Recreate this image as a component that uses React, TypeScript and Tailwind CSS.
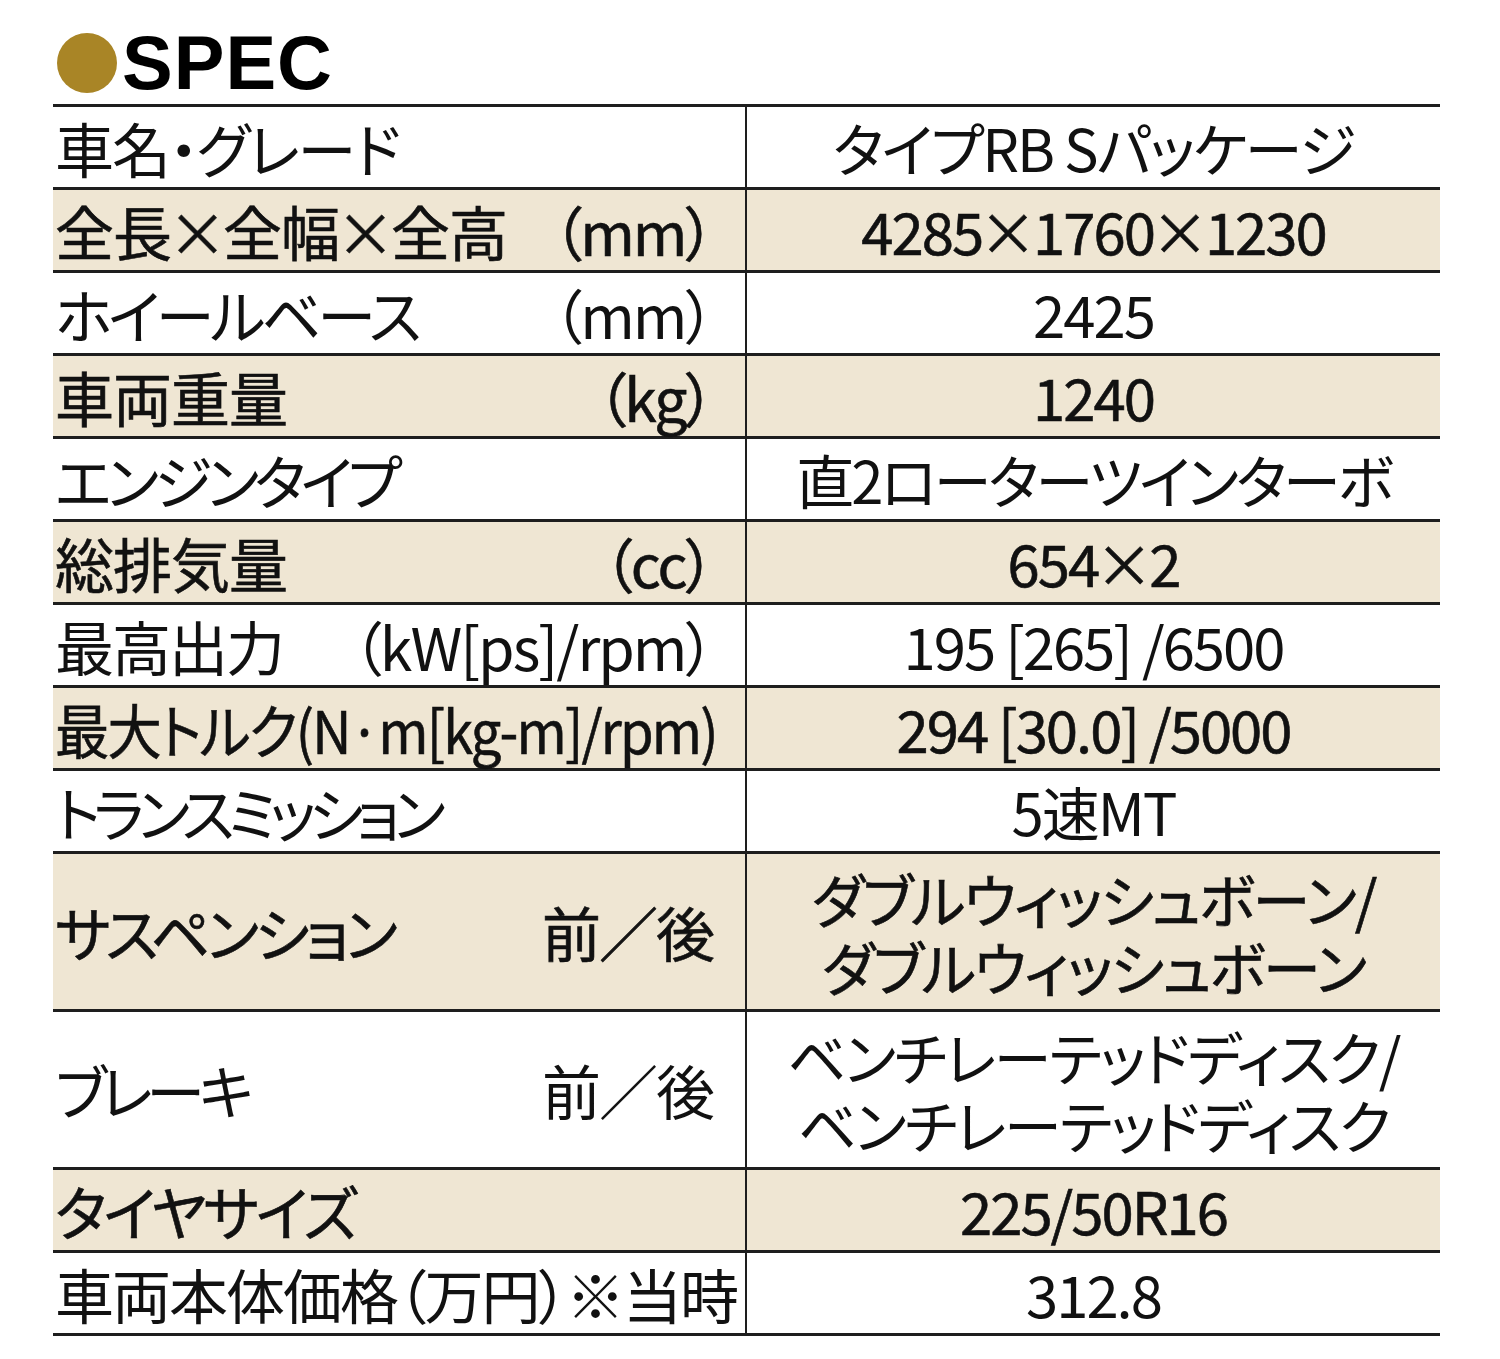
import React from "react";

interface SpecRow {
  label: string;
  unit?: string;
  value: string[];
  shade?: boolean;
  tall?: boolean;
  labelFit?: string;
  valueFit?: string;
}

const rows: SpecRow[] = [
  { label: "車名・グレード", value: ["タイプRB Sパッケージ"], labelFit: "tracking-[-2px]" },
  { label: "全長×全幅×全高", unit: "（mm）", value: ["4285×1760×1230"], shade: true },
  { label: "ホイールベース", unit: "（mm）", value: ["2425"], labelFit: "tracking-[-4px]" },
  { label: "車両重量", unit: "（kg）", value: ["1240"], shade: true },
  { label: "エンジンタイプ", value: ["直2ローターツインターボ"], labelFit: "tracking-[-5px]", valueFit: "tracking-[-3px]" },
  { label: "総排気量", unit: "（cc）", value: ["654×2"], shade: true },
  { label: "最高出力", unit: "（kW[ps]/rpm）", value: ["195 [265] /6500"], labelFit: "tracking-[-2px]" },
  { label: "最大トルク(N·m[kg-m]/rpm)", value: ["294 [30.0] /5000"], shade: true, labelFit: "tracking-[-2px] scale-x-[0.92]" },
  { label: "トランスミッション", value: ["5速MT"], labelFit: "tracking-[-7px]" },
  {
    label: "サスペンション",
    unit: "前／後",
    value: ["ダブルウィッシュボーン/", "ダブルウィッシュボーン"],
    shade: true,
    tall: true,
    labelFit: "tracking-[-4px]",
  },
  {
    label: "ブレーキ",
    unit: "前／後",
    value: ["ベンチレーテッドディスク/", "ベンチレーテッドディスク"],
    tall: true,
    labelFit: "tracking-[-6px]",
  },
  { label: "タイヤサイズ", value: ["225/50R16"], shade: true, labelFit: "tracking-[-3px]" },
  { label: "車両本体価格（万円）※当時", value: ["312.8"], labelFit: "tracking-[-2px]" },
];

// 全角の×を少し詰める
function Tight({ text }: { text: string }) {
  const parts = text.split("×");
  return (
    <>
      {parts.map((p, i) => (
        <React.Fragment key={i}>
          {i > 0 && <span className="tracking-[-4px] ml-[-3px]">×</span>}
          {p}
        </React.Fragment>
      ))}
    </>
  );
}

export default function App() {
  return (
    <div className="w-[1500px] h-[1359px] bg-white text-[#111] font-['Noto_Sans_CJK_JP',sans-serif] [font-feature-settings:'palt']">
      {/* Title */}
      <div className="flex items-center pl-[57px] pt-[33px] h-[104px] pb-[11px]">
        <div className="w-[60px] h-[60px] rounded-full bg-[#a98526] shrink-0" />
        <h1 className="ml-[5px] font-['Liberation_Sans',sans-serif] font-bold text-[76px] leading-none tracking-[1px] text-black">
          SPEC
        </h1>
      </div>

      {/* Spec table */}
      <div className="ml-[53px] w-[1387px] border-t-[3px] border-[#1e1e1e]">
        {rows.map((row) => (
          <div
            key={row.label}
            className={`flex border-b-[3px] border-[#1e1e1e] ${row.tall ? "h-[158px]" : "h-[83px]"} ${
              row.shade ? "bg-[#efe6d3] [-webkit-text-stroke:0.6px_#111]" : "bg-white"
            }`}
          >
            <div className="w-[694px] border-r-2 border-[#1e1e1e] flex items-center justify-between pl-[2px] pr-[32px] text-[59px] leading-none whitespace-nowrap">
              <span className={`inline-block origin-left ${row.labelFit ?? "tracking-[-1px]"}`}>
                <Tight text={row.label} />
              </span>
              {row.unit && <span className="tracking-[-2px]">{row.unit}</span>}
            </div>
            <div
              className={`flex-1 flex items-center justify-center text-[58px] text-center leading-[68px] whitespace-nowrap ${
                row.valueFit ?? "tracking-[-2px]"
              }`}
            >
              <div>
                {row.value.map((line, i) => (
                  <React.Fragment key={line}>
                    {i > 0 && <br />}
                    <Tight text={line} />
                  </React.Fragment>
                ))}
              </div>
            </div>
          </div>
        ))}
      </div>
    </div>
  );
}
